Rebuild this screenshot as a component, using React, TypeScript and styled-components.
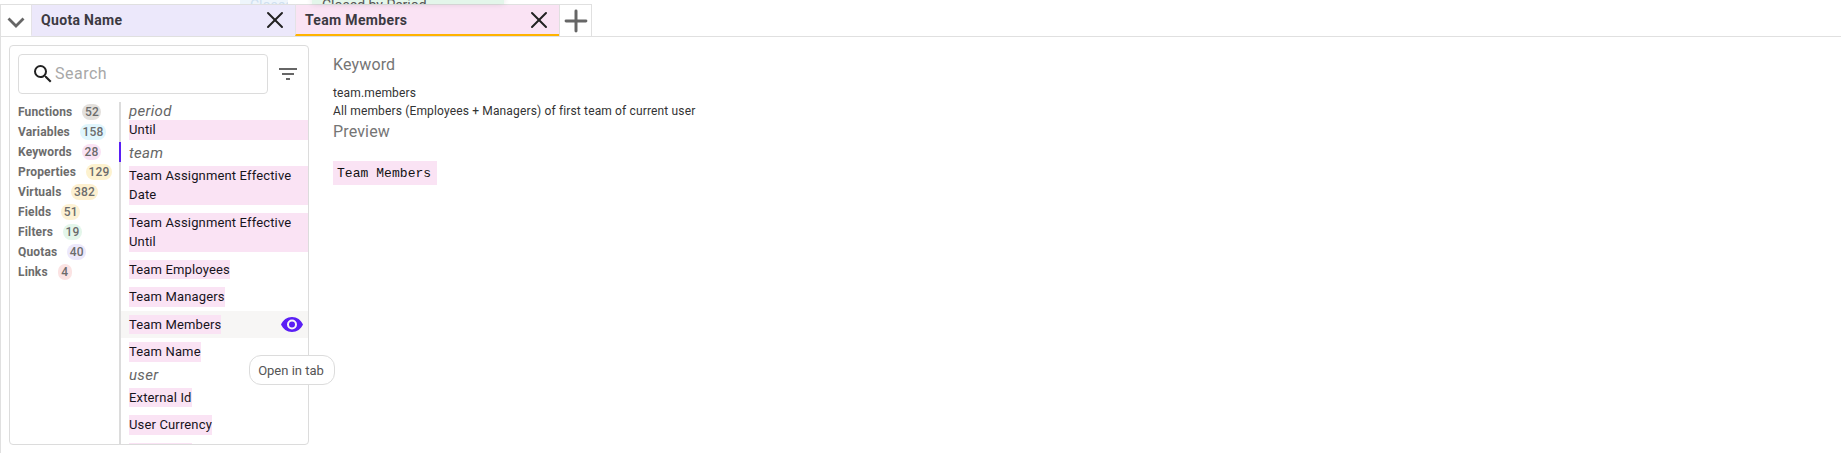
import React from "react";
import styled, { createGlobalStyle } from "styled-components";
import { Plus, X } from "lucide-react";

const Global = createGlobalStyle`
  html, body {
    margin: 0;
    padding: 0;
    background: #fff;
    overflow: hidden;
  }
  body {
    font-family: Roboto, "Liberation Sans", sans-serif;
  }
`;

const Page = styled.div`
  width: 1841px;
  height: 453px;
  position: relative;
  overflow: hidden;
`;

const BehindTab = styled.div<{ $left: number; $width: number; $bg: string; $color: string; $shadow?: boolean }>`
  position: absolute;
  top: -3px;
  left: ${(p) => p.$left}px;
  width: ${(p) => p.$width}px;
  height: 7px;
  padding-left: 10px;
  box-sizing: border-box;
  overflow: hidden;
  background: ${(p) => p.$bg};
  color: ${(p) => p.$color};
  font-size: 14px;
  line-height: 17px;
  white-space: nowrap;
  box-shadow: ${(p) => (p.$shadow ? "0 0 6px rgba(0, 0, 0, 0.12)" : "none")};
`;

const TabBar = styled.div`
  display: flex;
  height: 32px;
  margin-top: 4px;
  border-bottom: 1px solid #e0e0e0;
`;

const Collapse = styled.button`
  width: 31px;
  height: 32px;
  padding: 4px 0 0;
  box-sizing: border-box;
  border: none;
  border-top: 1px solid #e0e0e0;
  border-left: 1px solid #e0e0e0;
  background: #fff;
  display: flex;
  align-items: center;
  justify-content: center;
`;

const Tab = styled.div<{ $bg: string; $active?: boolean }>`
  width: 264px;
  height: 32px;
  padding: 0 6px 0 9px;
  box-sizing: border-box;
  display: flex;
  align-items: center;
  justify-content: space-between;
  background: ${(p) => p.$bg};
  border-top: 1px solid #e0e0e0;
  border-left: 1px solid #e4e2e6;
  border-bottom: 2px solid ${(p) => (p.$active ? "#ffb300" : "transparent")};
  color: #3c3a42;
  font-size: 14px;
  font-weight: 700;
  letter-spacing: 0.33px;
`;

const AddTab = styled.button`
  width: 33px;
  height: 32px;
  padding: 0;
  box-sizing: border-box;
  border: 1px solid #e0e0e0;
  border-bottom: none;
  background: #fff;
  display: flex;
  align-items: center;
  justify-content: center;
  color: #666;

  svg {
    flex: none;
  }
`;

const Body = styled.div`
  display: flex;
  height: 416px;
  box-sizing: border-box;
  padding: 8px 0 0 8px;
  gap: 24px;
  border-left: 1px solid #e0e0e0;
`;

const Panel = styled.div`
  width: 300px;
  height: 400px;
  flex: none;
  box-sizing: border-box;
  border: 1px solid #dcdcdc;
  border-radius: 4px;
  padding: 8px 0 0 8px;
  overflow: hidden;
  display: flex;
  flex-direction: column;
`;

const SearchRow = styled.div`
  display: flex;
  align-items: center;
  gap: 11px;
  height: 40px;
  flex: none;
`;

const SearchBox = styled.div`
  width: 250px;
  height: 40px;
  box-sizing: border-box;
  border: 1px solid #dcdcdc;
  border-radius: 4px;
  padding: 0 0 1px 12px;
  display: flex;
  align-items: center;
  color: #a8a8a8;
  font-size: 16px;
  letter-spacing: 0.5px;
`;

const Columns = styled.div`
  display: flex;
  margin-top: 8px;
  flex: 1;
  min-height: 0;
`;

const Categories = styled.div`
  width: 101px;
  flex: none;
`;

const Category = styled.div`
  display: flex;
  align-items: center;
  gap: 10px;
  height: 20px;
  color: #6c6c6c;
  font-size: 12px;
  font-weight: 700;
  letter-spacing: 0.15px;
`;

const Count = styled.span<{ $bg: string }>`
  background: ${(p) => p.$bg};
  border-radius: 8px;
  padding: 0 2.5px;
  min-width: 9px;
  line-height: 16px;
  text-align: center;
  font-size: 12px;
  font-weight: 500;
  letter-spacing: 0.2px;
`;

const ItemList = styled.div`
  flex: 1;
  min-width: 0;
  border-left: 2px solid #dcdcdc;
  position: relative;
`;

const ActiveMark = styled.div`
  position: absolute;
  left: -2px;
  top: 40px;
  width: 2px;
  height: 20px;
  background: #5a1ff5;
`;

const Group = styled.div`
  padding-left: 8px;
  color: #666;
  font-size: 15px;
  font-style: italic;
  letter-spacing: 0.3px;
  line-height: 18px;
  height: 18px;
`;

const Row = styled.div<{ $hover?: boolean; $wide?: boolean; $flush?: boolean }>`
  display: flex;
  align-items: center;
  justify-content: space-between;
  padding: ${(p) => (p.$flush ? 0 : 4)}px ${(p) => (p.$wide ? 0 : 5)}px 4px 8px;
  background: ${(p) => (p.$hover ? "#f7f6f5" : "transparent")};
`;

const Label = styled.span<{ $wide?: boolean }>`
  ${(p) => (p.$wide ? "flex: 1;" : "")}
  background: #fae3f4;
  color: #17141c;
  font-size: 13px;
  line-height: 19.5px;
  letter-spacing: 0.15px;
`;

const Detail = styled.div`
  padding-top: 10px;
  color: #333;
  font-size: 12px;
  letter-spacing: 0.15px;
`;

const Heading = styled.div`
  color: #757575;
  font-size: 16px;
  line-height: 20px;
`;

const DetailLine = styled.div`
  line-height: 18px;
`;

const KeywordLine = styled(DetailLine)`
  margin-top: 9px;
`;

const PreviewHeading = styled(Heading)`
  margin-top: 2px;
`;

const Preview = styled.div`
  width: fit-content;
  margin-top: 19px;
  padding: 1px 6px 0 4px;
  background: #fae3f4;
  color: #111;
  font-family: "Liberation Mono", monospace;
  font-size: 13px;
  letter-spacing: 0.05px;
  line-height: 23px;
`;

const Tooltip = styled.div`
  position: absolute;
  left: 249px;
  top: 355px;
  width: 86px;
  height: 30px;
  padding-right: 2px;
  box-sizing: border-box;
  border: 1px solid #dcdcdc;
  border-radius: 12px;
  background: #fff;
  color: #555;
  font-size: 13px;
  display: flex;
  align-items: center;
  justify-content: center;
`;

const categories = [
  ["Functions", "52", "#e3e0dc"],
  ["Variables", "158", "#e0f6fd"],
  ["Keywords", "28", "#fae3f4"],
  ["Properties", "129", "#fdf2cf"],
  ["Virtuals", "382", "#fdf0d0"],
  ["Fields", "51", "#fdf2d5"],
  ["Filters", "19", "#e3f6ea"],
  ["Quotas", "40", "#ece8fb"],
  ["Links", "4", "#fbe3e3"],
];

function Chevron() {
  return (
    <svg width="18" height="11" viewBox="0 0 18 11">
      <path d="M1.500 1.500L9 9l7.500-7.500" fill="none" stroke="#666" strokeWidth="2.800" />
    </svg>
  );
}

function SearchIcon() {
  return (
    <svg width="24" height="24" viewBox="0 0 24 24">
      <path
        fill="#222"
        d="M15.500 14h-.79l-.28-.27A6.471 6.471 0 0 0 16 9.500 6.500 6.500 0 1 0 9.500 16c1.610 0 3.090-.59 4.230-1.570l.27.28v.79l5 4.990L20.490 19l-4.990-5zm-6 0C7.010 14 5 11.990 5 9.500S7.010 5 9.500 5 14 7.010 14 9.500 11.990 14 9.500 14z"
      />
    </svg>
  );
}

function FilterIcon() {
  return (
    <svg width="18" height="12" viewBox="0 0 18 12">
      <path d="M0 1h18M3 6h12M7 11h4" stroke="#666" strokeWidth="2" />
    </svg>
  );
}

function EyeIcon() {
  return (
    <svg width="22" height="15" viewBox="0 0 22 15">
      <path
        fillRule="evenodd"
        fill="#5a1ff5"
        d="M11 0C6 0 2 3 0 7.500C2 12 6 15 11 15s9-3 11-7.500C20 3 16 0 11 0zm0 12.500a5 5 0 1 1 0-10 5 5 0 0 1 0 10zm0-8a3 3 0 1 0 0 6 3 3 0 0 0 0-6z"
      />
    </svg>
  );
}

export default function App() {
  return (
    <Page>
      <Global />
      <BehindTab $left={240} $width={48} $bg="#eef5fb" $color="#cfe0f0">
        Closed
      </BehindTab>
      <BehindTab $left={312} $width={192} $bg="#e3f6ea" $color="#555" $shadow>
        Closed by Period
      </BehindTab>
      <TabBar>
        <Collapse>
          <Chevron />
        </Collapse>
        <Tab $bg="#ece8fb">
          Quota Name
          <X size={28} color="#222" strokeWidth={1.7} />
        </Tab>
        <Tab $bg="#fae3f4" $active>
          Team Members
          <X size={28} color="#222" strokeWidth={1.7} />
        </Tab>
        <AddTab>
          <Plus size={34} strokeWidth={2.1} />
        </AddTab>
      </TabBar>
      <Body>
        <Panel>
          <SearchRow>
            <SearchBox>
              <SearchIcon />
              Search
            </SearchBox>
            <FilterIcon />
          </SearchRow>
          <Columns>
            <Categories>
              {categories.map(([name, count, bg]) => (
                <Category key={name}>
                  {name}
                  <Count $bg={bg}>{count}</Count>
                </Category>
              ))}
            </Categories>
            <ItemList>
              <ActiveMark />
              <Group>period</Group>
              <Row $wide $flush>
                <Label $wide>Until</Label>
              </Row>
              <Group>team</Group>
              <Row $wide>
                <Label $wide>Team Assignment Effective Date</Label>
              </Row>
              <Row $wide>
                <Label $wide>Team Assignment Effective Until</Label>
              </Row>
              <Row>
                <Label>Team Employees</Label>
              </Row>
              <Row>
                <Label>Team Managers</Label>
              </Row>
              <Row $hover>
                <Label>Team Members</Label>
                <EyeIcon />
              </Row>
              <Row>
                <Label>Team Name</Label>
              </Row>
              <Group>user</Group>
              <Row>
                <Label>External Id</Label>
              </Row>
              <Row>
                <Label>User Currency</Label>
              </Row>
              <Row>
                <Label>User Email</Label>
              </Row>
            </ItemList>
          </Columns>
        </Panel>
        <Detail>
          <Heading>Keyword</Heading>
          <KeywordLine>team.members</KeywordLine>
          <DetailLine>All members (Employees + Managers) of first team of current user</DetailLine>
          <PreviewHeading>Preview</PreviewHeading>
          <Preview>Team Members</Preview>
        </Detail>
      </Body>
      <Tooltip>Open in tab</Tooltip>
    </Page>
  );
}
